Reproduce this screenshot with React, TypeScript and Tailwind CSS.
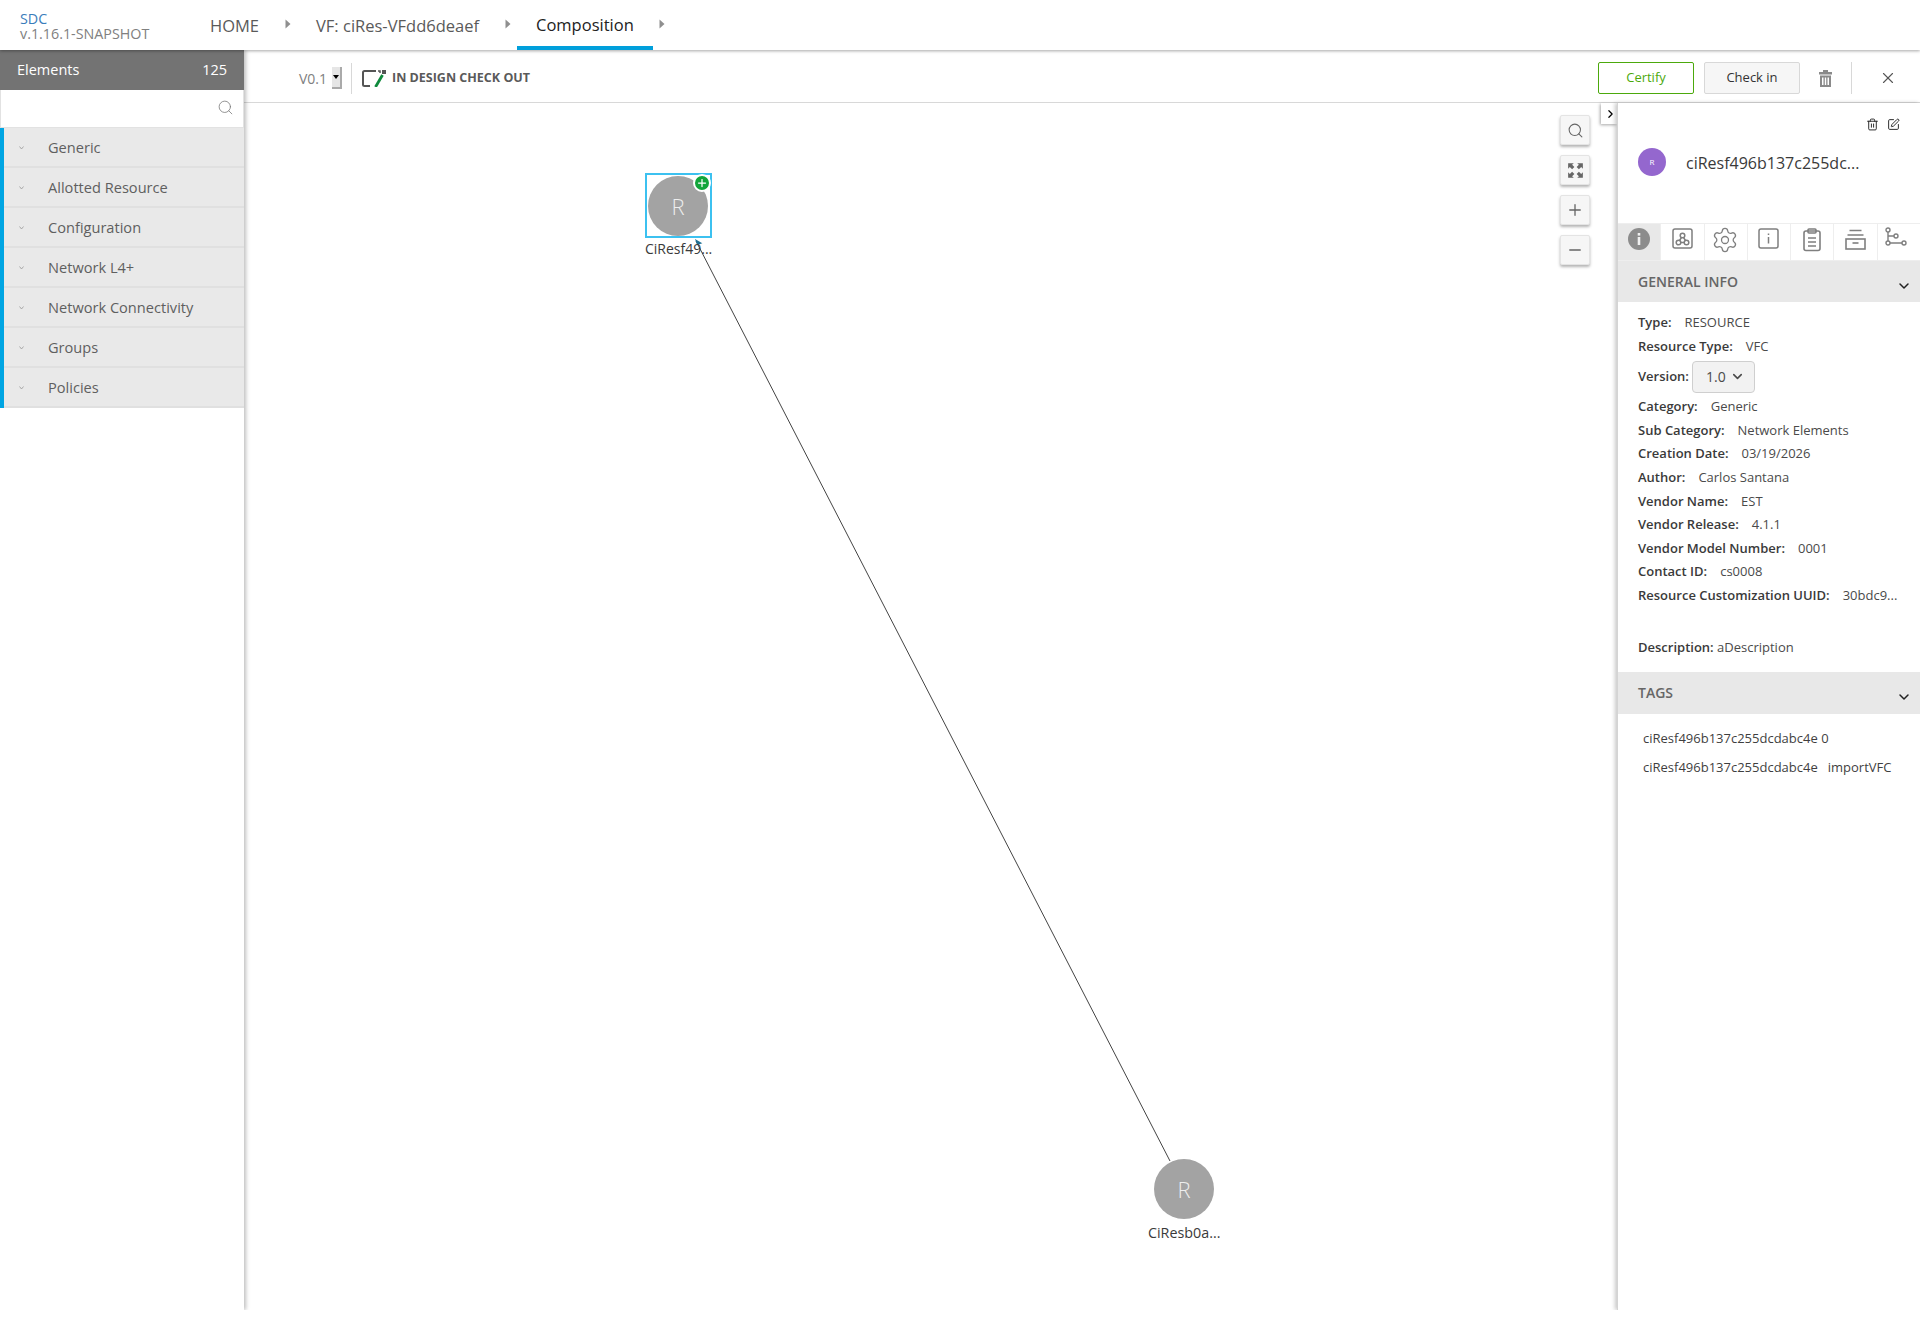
import React from "react";
import { Search, ChevronRight, ChevronDown, Plus, Minus, X, Settings, Trash2, SquarePen } from "lucide-react";

const elements = ["Generic", "Allotted Resource", "Configuration", "Network L4+", "Network Connectivity", "Groups", "Policies"];

function Crumb() {
  return (
    <svg width="6" height="10" viewBox="0 0 6 10" className="mx-[25px] mb-[3px]">
      <path d="M0.5 0.5 L5.5 5 L0.5 9.5 Z" fill="#8f8f8f" />
    </svg>
  );
}

function Row({ label, value }: { label: string; value: string }) {
  return (
    <div className="flex h-[23.6px] items-center whitespace-nowrap">
      <span className="font-semibold text-[#3a3a3a]">{label}</span>
      <span className="ml-[13px] text-[#4a4a4a]">{value}</span>
    </div>
  );
}

function Node({ className }: { className: string }) {
  return (
    <div className={"absolute flex h-[60px] w-[60px] items-center justify-center rounded-full bg-[#a3a3a3] text-[22px] font-light text-[#eeeeee] " + className}>
      R
    </div>
  );
}

function ZoomBtn({ children }: { children: React.ReactNode }) {
  return (
    <div className="flex h-[30px] w-[30px] items-center justify-center rounded-[2px] border border-[#e4e4e4] bg-[#f6f6f6] text-[#666666] shadow-[0_2px_3px_rgba(0,0,0,0.3)]">
      {children}
    </div>
  );
}

function Tab({ children, active, last }: { children: React.ReactNode; active?: boolean; last?: boolean }) {
  return (
    <div className={"flex h-[36px] flex-1 items-start justify-center pt-[4px] " + (last ? "" : "border-r border-[#eeeeee] ") + (active ? "bg-[#e8e8e8]" : "bg-white")}>
      {children}
    </div>
  );
}

function BigTrash() {
  return (
    <svg width="13" height="17" viewBox="0 0 13 17" className="ml-[19px]" fill="#8a8a8a">
      <rect x="4" y="0" width="5" height="2" />
      <rect x="0" y="2" width="13" height="2.500" />
      <path d="M1 5.500 H12 V17 H1 Z M3 7.500 V15 H4.500 V7.500 Z M5.800 7.500 V15 H7.200 V7.500 Z M8.500 7.500 V15 H10 V7.500 Z" fillRule="evenodd" />
    </svg>
  );
}

export default function App() {
  return (
    <div className="flex h-[1310px] w-[1920px] flex-col overflow-hidden bg-white text-[13px] text-[#333333]" style={{ fontFamily: '"Open Sans", sans-serif' }}>
      <header className="relative z-20 flex h-[50px] shrink-0 items-center bg-white shadow-[0_1px_3px_rgba(0,0,0,0.35)]">
        <div className="ml-[20px] w-[190px] pt-[1px] text-[14.3px] leading-[15px]">
          <div className="text-[#3a7dbb]">SDC</div>
          <div className="text-[#808080]">v.1.16.1-SNAPSHOT</div>
        </div>
        <span className="pt-[2px] text-[16.5px] text-[#5a5a5a]">HOME</span>
        <div className="ml-[1px]"><Crumb /></div>
        <span className="pt-[2px] text-[16.5px] text-[#5a5a5a]">VF: ciRes-VFdd6deaef</span>
        <div className="ml-[1px]"><Crumb /></div>
        <div className="-mx-[19px] flex h-[50px] items-center border-b-[4px] border-[#009fdb] px-[19px] pt-[4px] text-[16.5px] text-[#222222]">Composition</div>
        <Crumb />
      </header>

      <div className="flex min-h-0 flex-1">
        <aside className="relative z-10 flex w-[244px] shrink-0 flex-col shadow-[2px_0_4px_rgba(0,0,0,0.25)]">
          <div className="flex h-[40px] items-center justify-between bg-[#737373] px-[17px] text-[14.5px] text-white">
            <span>Elements</span>
            <span>125</span>
          </div>
          <div className="flex h-[38px] items-center justify-end border border-t-0 border-[#e2e2e2] bg-white pb-[2px] pr-[9px]">
            <Search size={17} strokeWidth={1.1} className="text-[#777777]" />
          </div>
          <div className="border-l-[4px] border-[#00a5e3]">
            {elements.map((e) => (
              <div key={e} className="relative flex h-[40px] items-center border-b-2 border-[#e0e0e0] bg-[#e9e9e9] pl-[44px] pt-[2px] text-[14.6px] text-[#5f5f5f]">
                <svg width="5" height="4" viewBox="0 0 5 4" className="absolute left-[15px] top-[18px]">
                  <path d="M0.5 0.500 L2.500 3 L4.500 0.500" fill="none" stroke="#999999" strokeWidth="0.8" />
                </svg>
                {e}
              </div>
            ))}
          </div>
        </aside>

        <main className="flex min-w-0 flex-1 flex-col">
          <div className="flex h-[53px] shrink-0 items-center border-b border-[#d8d8d8] bg-white pl-[55px] pt-[4px]">
            <span className="text-[14px] text-[#808080]">V0.1</span>
            <div className="ml-[5px] flex h-[22px] w-[10px] items-center justify-center border-b-2 border-r-2 border-[#aaaaaa] bg-[#e6e6e6]">
              <div className="h-0 w-0 border-x-[3px] border-t-[4px] border-x-transparent border-t-black" />
            </div>
            <div className="ml-[9px] h-[31px] w-px bg-[#d8d8d8]" />
            <svg width="24" height="17" viewBox="0 0 24 17" className="ml-[10px]">
              <path d="M14 1 H2.500 Q1 1 1 2.500 V14.500 Q1 16 2.500 16 H8" fill="none" stroke="#555555" strokeWidth="2" />
              <path d="M16 1 H18 V3" fill="none" stroke="#555555" strokeWidth="1.5" />
              <rect x="20" y="0" width="4" height="4" fill="#555555" />
              <path d="M20.500 5 L13.500 17" stroke="#0f8a3c" strokeWidth="2.800" />
            </svg>
            <span className="ml-[6px] text-[12.5px] font-bold text-[#5a5a5a]">IN DESIGN CHECK OUT</span>
            <div className="ml-auto flex items-center">
              <button className="h-[32px] w-[96px] rounded-[2px] border border-[#4ca90c] bg-white text-[13px] font-medium text-[#4ca90c]">Certify</button>
              <button className="ml-[10px] h-[32px] w-[96px] rounded-[2px] border border-[#d8d8d8] bg-[#f6f6f6] text-[13px] font-medium text-[#333333]">Check in</button>
              <BigTrash />
              <div className="ml-[19px] h-[32px] w-px bg-[#d8d8d8]" />
              <X size={18} strokeWidth={1.5} className="ml-[27px] mr-[23px] text-[#555555]" />
            </div>
          </div>

          <div className="flex min-h-0 flex-1">
            <div className="relative min-w-0 flex-1 bg-white">
              <svg className="absolute inset-0 h-full w-full">
                <line x1="926" y1="1058" x2="452" y2="138" stroke="#444444" strokeWidth="1" />
              </svg>
              <div className="absolute left-[401px] top-[70px] h-[65px] w-[67px] border-[2px] border-[#3cc1f0]" />
              <Node className="left-[404px] top-[73px]" />
              <svg className="absolute left-[446px] top-[132px]" width="16" height="14" viewBox="0 0 16 14">
                <path d="M5 4 L12.300 8.300 L7.300 10 Z" fill="#1f6f92" />
              </svg>
              <div className="absolute left-[449px] top-[71px] flex h-[18px] w-[18px] items-center justify-center rounded-full border-[2px] border-white bg-[#12a53a] text-white">
                <Plus size={12} strokeWidth={2.5} />
              </div>
              <span className="absolute left-[401px] top-[135px] text-[14px] text-[#3a3a3a]">CiResf49...</span>
              <Node className="left-[910px] top-[1056px]" />
              <span className="absolute left-[904px] top-[1119px] text-[14.3px] text-[#3a3a3a]">CiResb0a...</span>
              <div className="absolute right-[27px] top-[12px] flex flex-col gap-[10px]">
                <ZoomBtn><Search size={17} strokeWidth={1.5} /></ZoomBtn>
                <ZoomBtn>
                  <svg width="17" height="17" viewBox="0 0 15 15" fill="#666666">
                    <path d="M1 1h5L4.500 2.500 6.500 4.500 4.500 6.500 2.500 4.500 1 6zM14 1v5L12.500 4.500 10.500 6.500 8.500 4.500 10.500 2.500 9 1zM1 14V9l1.500 1.500 2-2 2 2-2 2L6 14zM14 14H9l1.500-1.500-2-2 2-2 2 2L14 9z" />
                  </svg>
                </ZoomBtn>
                <ZoomBtn><Plus size={18} strokeWidth={1.75} /></ZoomBtn>
                <ZoomBtn><Minus size={18} strokeWidth={1.75} /></ZoomBtn>
              </div>
              <div className="absolute right-0 top-0 flex h-[21px] w-[16px] items-center justify-center bg-white pl-[3px] text-black shadow-[-1px_1px_3px_rgba(0,0,0,0.35)]">
                <ChevronRight size={16} strokeWidth={2.25} />
              </div>
            </div>

            <aside className="relative flex w-[303px] shrink-0 flex-col border-l border-[#d4d4d4] bg-white text-[13px] shadow-[-2px_0_4px_rgba(0,0,0,0.22)]">
              <div className="flex h-[120px] flex-col">
                <div className="flex justify-end gap-[8px] pr-[20px] pt-[15px] text-[#222222]">
                  <Trash2 size={13} strokeWidth={1.75} />
                  <SquarePen size={13} strokeWidth={1.75} />
                </div>
                <div className="mt-[17px] flex items-center pl-[20px]">
                  <div className="flex h-[28px] w-[28px] items-center justify-center rounded-full bg-[#9467ce] text-[8px] text-white">R</div>
                  <span className="ml-[20px] pt-[2px] text-[16px] text-[#3a3a3a]">ciResf496b137c255dc...</span>
                </div>
              </div>
              <div className="flex border-y border-[#eeeeee]">
                <Tab active>
                  <svg width="22" height="22" viewBox="0 0 22 22">
                    <circle cx="11" cy="11" r="11" fill="#8c8c8c" />
                    <rect x="9.700" y="9" width="2.600" height="8" fill="#f0f0f0" />
                    <rect x="9.700" y="5" width="2.600" height="2.600" fill="#f0f0f0" />
                  </svg>
                </Tab>
                <Tab>
                  <svg width="21" height="21" viewBox="0 0 21 21" fill="none" stroke="#7f7f7f" strokeWidth="1.500">
                    <rect x="1" y="1" width="19" height="19" rx="2" />
                    <circle cx="10.500" cy="7.500" r="2.300" /><circle cx="6.500" cy="14.500" r="2.300" /><circle cx="14.500" cy="14.500" r="2.300" />
                    <path d="M9.500 9.500 L7.500 12.500 M11.500 9.500 L13.500 12.500 M8.800 14.500 H12.200" />
                  </svg>
                </Tab>
                <Tab><div className="-mt-[2px] -ml-[1px] text-[#7f7f7f]"><Settings size={28} strokeWidth={1.1} /></div></Tab>
                <Tab>
                  <svg width="21" height="21" viewBox="0 0 21 21" fill="none" stroke="#7f7f7f" strokeWidth="1.500" className="-ml-[1px]">
                    <rect x="1" y="1" width="19" height="19" rx="2" />
                    <path d="M10.500 9 V15.500" /><path d="M10.500 5.500 V7" />
                  </svg>
                </Tab>
                <Tab>
                  <svg width="20" height="24" viewBox="0 0 20 24" fill="none" stroke="#7f7f7f" strokeWidth="1.600">
                    <rect x="2" y="3" width="16" height="19.500" rx="2" />
                    <rect x="6" y="1" width="8" height="4" rx="1" />
                    <path d="M6 10 H14 M6 14 H14 M6 18 H14" />
                  </svg>
                </Tab>
                <Tab>
                  <svg width="21" height="24" viewBox="0 0 21 24" fill="none" stroke="#7f7f7f" strokeWidth="1.600">
                    <path d="M4.500 2.500 H16.500 M2.500 7 H18.500" />
                    <rect x="1" y="11" width="19" height="10" />
                    <path d="M7.500 15 H13.500" />
                  </svg>
                </Tab>
                <Tab last>
                  <div className="-ml-[6px] -mt-[1px]">
                    <svg width="22" height="20" viewBox="0 0 22 20" fill="none" stroke="#7f7f7f" strokeWidth="1.400">
                      <circle cx="3" cy="3" r="2" /><circle cx="3" cy="16" r="2" /><circle cx="11" cy="9" r="2" /><circle cx="19" cy="16" r="2" />
                      <path d="M3 5 V14 M5 16 H17 M3 9 H9" />
                    </svg>
                  </div>
                </Tab>
              </div>

              <div className="relative flex h-[41px] items-center bg-[#e8e8e8] pl-[20px] text-[14px] font-semibold text-[#666666]">
                GENERAL INFO
                <ChevronDown size={16} strokeWidth={2.25} className="absolute right-[8px] top-[17px] text-[#222222]" />
              </div>
              <div className="pl-[20px] pr-[20px] pt-[9px]">
                <Row label="Type:" value="RESOURCE" />
                <Row label="Resource Type:" value="VFC" />
                <div className="flex h-[37px] items-center whitespace-nowrap">
                  <span className="font-semibold text-[#3a3a3a]">Version:</span>
                  <div className="ml-[3px] flex h-[32px] w-[63px] items-center justify-center gap-[4px] rounded-[4px] border border-[#cfcfcf] bg-[#f2f2f2] pl-[4px] text-[14px] text-[#4a4a4a]">
                    1.0 <ChevronDown size={15} strokeWidth={2.5} />
                  </div>
                </div>
                <Row label="Category:" value="Generic" />
                <Row label="Sub Category:" value="Network Elements" />
                <Row label="Creation Date:" value="03/19/2026" />
                <Row label="Author:" value="Carlos Santana" />
                <Row label="Vendor Name:" value="EST" />
                <Row label="Vendor Release:" value="4.1.1" />
                <Row label="Vendor Model Number:" value="0001" />
                <Row label="Contact ID:" value="cs0008" />
                <Row label="Resource Customization UUID:" value="30bdc9..." />
                <div className="mt-[27px] h-[25px] whitespace-nowrap leading-[24px]">
                  <span className="font-semibold text-[#3a3a3a]">Description:</span> <span className="text-[#4a4a4a]">aDescription</span>
                </div>
              </div>
              <div className="relative mt-[12px] flex h-[42px] items-center bg-[#e8e8e8] pl-[20px] text-[14px] font-semibold text-[#666666]">
                TAGS
                <ChevronDown size={16} strokeWidth={2.25} className="absolute right-[8px] top-[17px] text-[#222222]" />
              </div>
              <div className="pl-[25px] pt-[11px] text-[#3f3f3f]">
                <div className="flex h-[29px] items-center whitespace-nowrap">ciResf496b137c255dcdabc4e 0</div>
                <div className="flex h-[29px] items-center whitespace-nowrap">ciResf496b137c255dcdabc4e<span className="ml-[10px]">importVFC</span></div>
              </div>
            </aside>
          </div>
        </main>
      </div>
    </div>
  );
}
